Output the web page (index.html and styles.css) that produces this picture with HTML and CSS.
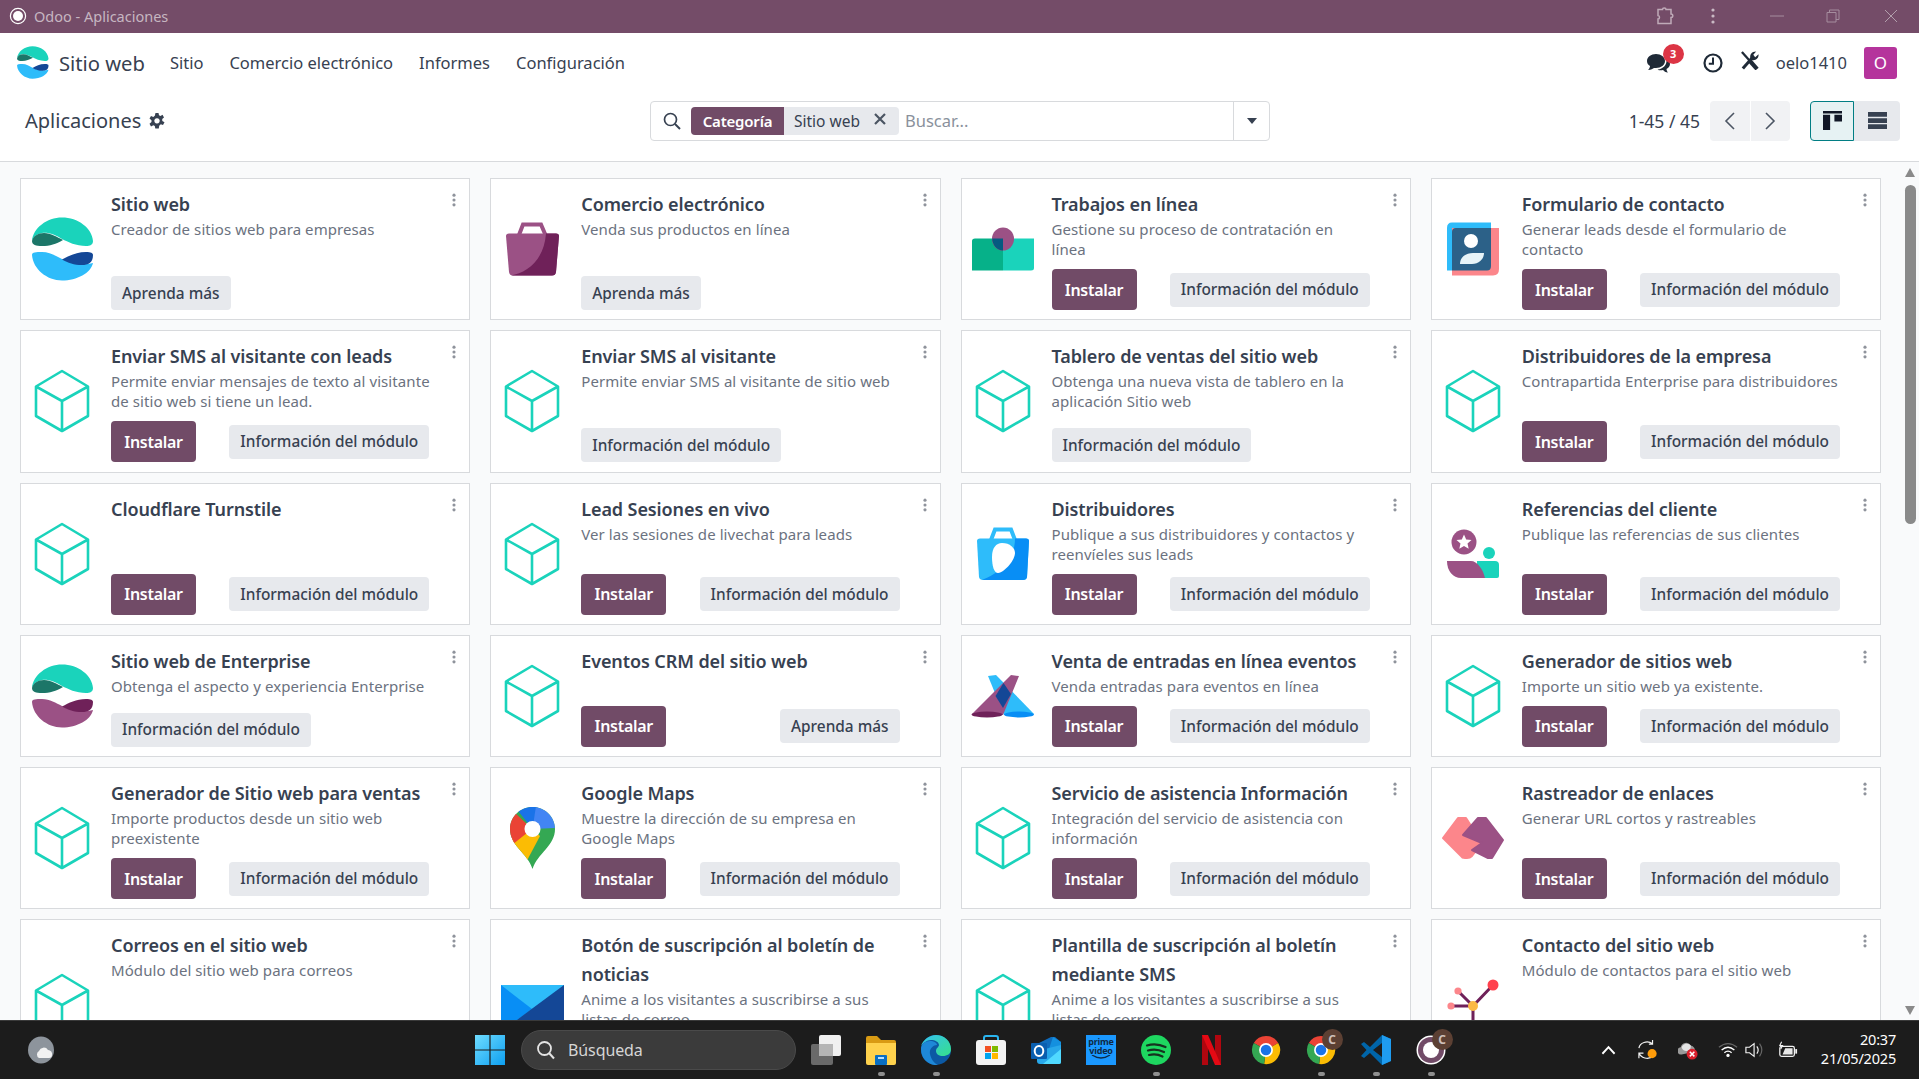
FILE: index.html
```html
<!DOCTYPE html>
<html lang="es">
<head>
<meta charset="utf-8">
<title>Odoo - Aplicaciones</title>
<link rel="stylesheet" href="styles.css">
</head>
<body>
<svg class="defs" width="0" height="0" aria-hidden="true">
  <defs>
    <symbol id="cube" viewBox="0 0 64 64"><path d="M32 2 58 17.5V47L32 62 6 47V17.5ZM6 17.5 32 32 58 17.5M32 32V62" fill="none" stroke="#1ad3bb" stroke-width="2.6" stroke-linejoin="round"/></symbol>
    <symbol id="dots" viewBox="0 0 6 16"><circle cx="3" cy="2.5" r="1.8"/><circle cx="3" cy="8" r="1.8"/><circle cx="3" cy="13.5" r="1.8"/></symbol>
    <symbol id="wave-top" viewBox="0 0 64 64"><path fill="#1ad3bb" d="M2 24C3 11 17 .5 32 .5 48 .5 62 11 63 24 63 28 60 29 56 29 46 29 38 25 32 22 26 18 18 15 12 16 7 17 4 19 2 24Z"/><path fill="#1c7668" d="M2 24C3 19 8 16 14 16 21 16 27 20 33 23 26 27 20 29 12 29 6 29 2 28 2 24Z"/></symbol>
    <symbol id="chrome" viewBox="0 0 32 32"><path fill="#ea4335" d="M16 16 3 8.5A15 15 0 0 1 29 8.5Z"/><path fill="#fbbc04" d="M16 16 29 8.5A15 15 0 0 1 14 30.9Z"/><path fill="#34a853" d="M16 16 14 30.9A15 15 0 0 1 3 8.5Z"/><circle cx="16" cy="16" r="7.4" fill="#fff"/><circle cx="16" cy="16" r="5.6" fill="#1a73e8"/></symbol>
  </defs>
</svg>
<div class="app">
  <header class="titlebar">
    <div class="tb-left">
      <svg class="tb-app" viewBox="0 0 18 18"><circle cx="9" cy="9" r="7.6" fill="none" stroke="#fff" stroke-width="1.2"/><circle cx="9" cy="9" r="5" fill="#fff"/></svg>
      <span>Odoo - Aplicaciones</span>
    </div>
    <div class="tb-right">
      <svg class="tb-ico tb-puzzle" viewBox="0 0 20 20"><path d="M3 3.5H7.5C7.5 1.5 11 1.5 11 3.5H16V8C18.4 8 18.4 11.5 16 11.5V17.5H3V13C5 13 5 9.5 3 9.5Z" fill="none" stroke="#bfaab8" stroke-width="1.5"/></svg>
      <svg class="tb-ico tb-more" viewBox="0 0 6 18"><circle cx="3" cy="3" r="1.6" fill="#c9b9c4"/><circle cx="3" cy="9" r="1.6" fill="#c9b9c4"/><circle cx="3" cy="15" r="1.6" fill="#c9b9c4"/></svg>
      <svg class="tb-ico tb-min" viewBox="0 0 14 14"><path d="M0 7H14" stroke="#a58d9e" stroke-width="1"/></svg>
      <svg class="tb-ico tb-rest" viewBox="0 0 14 14"><path d="M1 3.5H10V13H1ZM3.5 3.5V1H13V10.5H10" fill="none" stroke="#a58d9e" stroke-width="1"/></svg>
      <svg class="tb-ico tb-close" viewBox="0 0 14 14"><path d="M1 1 13 13M13 1 1 13" stroke="#b29fac" stroke-width="1"/></svg>
    </div>
  </header>

  <nav class="navbar">
    <svg class="nav-logo" viewBox="0 0 64 64"><use href="#wave-top"/><path fill="#2ebcfa" d="M2 38C2 35 6 35 12 35 20 35 26 39 32 42 38 45 44 47 52 47 56 47 60 47 63 46 61 56 47 63.5 32 63.5 17 63.5 3 52 2 38Z"/><path fill="#144796" d="M63 38C63 36 61 35 56 35 46 35 39 39 32 42.5 38 46 44 48 52 48 58 48 63 46 63 38Z"/></svg>
    <span class="nav-brand">Sitio web</span>
    <a class="nav-item">Sitio</a>
    <a class="nav-item">Comercio electrónico</a>
    <a class="nav-item">Informes</a>
    <a class="nav-item">Configuración</a>
    <div class="nav-right">
      <span class="chat">
        <svg class="chat-ico" viewBox="0 0 24 20"><path fill="#1f2a37" d="M10 1C5 1 1 4 1 8 1 10 2 12 4 13 4 14.500 3 16 2 17 5 17 7 15.500 8 15 9 15 9.500 15 10 15 15 15 19 12 19 8S15 1 10 1Z"/><path fill="#1f2a37" d="M20.500 7C21 12 17 16 11.500 16.500 13 17.500 15 17.500 17 17 18 18 19.500 19.500 22 19.500 21 18.500 20.500 17 20.500 16 22.500 15 24 13 24 11 24 9 22.500 8 20.500 7Z"/></svg>
        <span class="badge">3</span>
      </span>
      <svg class="nav-clock" viewBox="0 0 20 20"><circle cx="10" cy="10" r="8.500" fill="none" stroke="#1f2a37" stroke-width="2.200"/><path d="M10 4.500V10.800H5.800" fill="none" stroke="#1f2a37" stroke-width="2"/></svg>
      <svg class="nav-tools" viewBox="0 0 20 20"><path d="M2 1 10 10" stroke="#1f2a37" stroke-width="2.400"/><path d="M10 10 18 19" stroke="#1f2a37" stroke-width="4.400"/><path d="M3 18.500 12.500 7.500" stroke="#1f2a37" stroke-width="3.200"/><path d="M11 8C10 4 12 .5 17 .5L14 4 16 6.500 19.500 3.500C20 8 16 10.500 12.500 9.500Z" fill="#1f2a37"/></svg>
      <span class="nav-user">oelo1410</span>
      <span class="avatar">O</span>
    </div>
  </nav>

  <section class="control">
    <div class="crumb">
      <span class="crumb-title">Aplicaciones</span>
      <svg class="crumb-gear" viewBox="0 0 16 16"><path fill="#374151" fill-rule="evenodd" d="M6.500 0H9.500L10 2.200 11.500 2.900 13.500 1.800 15 4.500 13.200 6 13.300 8 15.500 9.200 14 12 11.800 11.200 10.200 12.800 9.800 15.500H6.300L5.800 13.100 4.300 12.300 2 13.500.5 10.800 2.500 9 2.500 7.200.5 5.600 2 3 4.300 3.900 5.800 2.700ZM8 5.200A2.700 2.700 0 1 0 8.001 5.200Z"/></svg>
    </div>
    <div class="search">
      <svg class="search-ico" viewBox="0 0 18 18"><circle cx="7.500" cy="7.500" r="6" fill="none" stroke="#374151" stroke-width="1.700"/><path d="M12 12 17 17" stroke="#374151" stroke-width="2"/></svg>
      <span class="facet-label">Categoría</span>
      <span class="facet-value">Sitio web<svg class="facet-x" viewBox="0 0 14 14"><path d="M2 2 12 12M12 2 2 12" stroke="#4b5563" stroke-width="2.200"/></svg></span>
      <span class="search-ph">Buscar...</span>
      <span class="search-drop"><span class="caret"></span></span>
    </div>
    <div class="tools">
      <span class="pager-text">1-45 / 45</span>
      <div class="pager">
        <span class="pager-btn"><svg viewBox="0 0 12 20"><path d="M10 2 2 10 10 18" fill="none" stroke="#4b5563" stroke-width="1.600"/></svg></span>
        <span class="pager-btn"><svg viewBox="0 0 12 20"><path d="M2 2 10 10 2 18" fill="none" stroke="#4b5563" stroke-width="1.600"/></svg></span>
      </div>
      <div class="views">
        <span class="view view-on"><svg viewBox="0 0 20 20"><path fill="#111827" d="M0 0H20V2.500H0ZM0 4H7.500V20H0ZM12 4H20V11H12Z"/></svg></span>
        <span class="view"><svg viewBox="0 0 20 20"><path fill="#374151" d="M0 1H20V6H0ZM0 7.500H20V12.500H0ZM0 14H20V19H0Z"/></svg></span>
      </div>
    </div>
  </section>

  <main class="content">
    <div class="grid">
      <article class="card">
        <svg class="card-icon" viewBox="0 0 64 64"><use href="#wave-top"/><path fill="#2ebcfa" d="M2 38C2 35 6 35 12 35 20 35 26 39 32 42 38 45 44 47 52 47 56 47 60 47 63 46 61 56 47 63.500 32 63.500 17 63.500 3 52 2 38Z"/><path fill="#144796" d="M63 38C63 36 61 35 56 35 46 35 39 39 32 42.500 38 46 44 48 52 48 58 48 63 46 63 38Z"/></svg>
        <div class="card-body">
          <h3>Sitio web</h3><p>Creador de sitios web para empresas</p>
          <div class="actions"><a class="btn-sec">Aprenda más</a></div>
        </div>
        <svg class="kebab"><use href="#dots"/></svg>
      </article>
      <article class="card">
        <svg class="card-icon" viewBox="0 0 64 64"><path d="M19 18 23 7.500H41L45.500 18" fill="none" stroke="#9b5185" stroke-width="4"/><path fill="#9b5185" d="M6 19Q6 16.500 9 16.500H56Q59 16.500 59 19L56 55Q55.500 58.500 52 58.500H13Q9.500 58.500 9 55Z"/><path fill="#6f2159" d="M46 16.500H56Q59 16.500 59 19L56 55Q55.500 58.500 52 58.500H11C26 56 44 44 46 16.500Z"/></svg>
        <div class="card-body">
          <h3>Comercio electrónico</h3><p>Venda sus productos en línea</p>
          <div class="actions"><a class="btn-sec">Aprenda más</a></div>
        </div>
        <svg class="kebab"><use href="#dots"/></svg>
      </article>
      <article class="card">
        <svg class="card-icon" viewBox="0 0 64 64"><path fill="#1ad3bb" d="M32 21.500H63V51Q63 53.500 60 53.500H32Z"/><path fill="#06b189" d="M1 24Q1 21.500 4 21.500H32V53.500H1Z"/><ellipse cx="32" cy="22" rx="11" ry="11.500" fill="#9b5185"/><path fill="#055a80" d="M21.200 21.500H32V33.500C26 33.500 21.200 28 21.200 21.500Z"/></svg>
        <div class="card-body">
          <h3>Trabajos en línea</h3><p>Gestione su proceso de contratación en<br>línea</p>
          <div class="actions"><a class="btn-pri">Instalar</a><a class="btn-sec">Información del módulo</a></div>
        </div>
        <svg class="kebab"><use href="#dots"/></svg>
      </article>
      <article class="card">
        <svg class="card-icon" viewBox="0 0 64 64"><path fill="#2ebcfa" d="M11 5.500H50V53.500H6V11Q6 5.500 11 5.500Z"/><path fill="#fc868b" d="M11 11H58V52Q58 58.500 52 58.500H11Z"/><path fill="#2c6188" d="M15 11H50V49Q50 53.500 46 53.500H11V15Q11 11 15 11Z"/><circle cx="30" cy="24" r="7" fill="#fff"/><path fill="#e8f4f8" d="M19 47C19 40 25 36 32 36H43C43 42 38 47 31 47Z"/></svg>
        <div class="card-body">
          <h3>Formulario de contacto</h3><p>Generar leads desde el formulario de<br>contacto</p>
          <div class="actions"><a class="btn-pri">Instalar</a><a class="btn-sec">Información del módulo</a></div>
        </div>
        <svg class="kebab"><use href="#dots"/></svg>
      </article>

      <article class="card">
        <svg class="card-icon"><use href="#cube"/></svg>
        <div class="card-body">
          <h3>Enviar SMS al visitante con leads</h3><p>Permite enviar mensajes de texto al visitante<br>de sitio web si tiene un lead.</p>
          <div class="actions"><a class="btn-pri">Instalar</a><a class="btn-sec">Información del módulo</a></div>
        </div>
        <svg class="kebab"><use href="#dots"/></svg>
      </article>
      <article class="card">
        <svg class="card-icon"><use href="#cube"/></svg>
        <div class="card-body">
          <h3>Enviar SMS al visitante</h3><p>Permite enviar SMS al visitante de sitio web</p>
          <div class="actions"><a class="btn-sec">Información del módulo</a></div>
        </div>
        <svg class="kebab"><use href="#dots"/></svg>
      </article>
      <article class="card">
        <svg class="card-icon"><use href="#cube"/></svg>
        <div class="card-body">
          <h3>Tablero de ventas del sitio web</h3><p>Obtenga una nueva vista de tablero en la<br>aplicación Sitio web</p>
          <div class="actions"><a class="btn-sec">Información del módulo</a></div>
        </div>
        <svg class="kebab"><use href="#dots"/></svg>
      </article>
      <article class="card">
        <svg class="card-icon"><use href="#cube"/></svg>
        <div class="card-body">
          <h3>Distribuidores de la empresa</h3><p>Contrapartida Enterprise para distribuidores</p>
          <div class="actions"><a class="btn-pri">Instalar</a><a class="btn-sec">Información del módulo</a></div>
        </div>
        <svg class="kebab"><use href="#dots"/></svg>
      </article>

      <article class="card">
        <svg class="card-icon"><use href="#cube"/></svg>
        <div class="card-body">
          <h3>Cloudflare Turnstile</h3>
          <div class="actions"><a class="btn-pri">Instalar</a><a class="btn-sec">Información del módulo</a></div>
        </div>
        <svg class="kebab"><use href="#dots"/></svg>
      </article>
      <article class="card">
        <svg class="card-icon"><use href="#cube"/></svg>
        <div class="card-body">
          <h3>Lead Sesiones en vivo</h3><p>Ver las sesiones de livechat para leads</p>
          <div class="actions"><a class="btn-pri">Instalar</a><a class="btn-sec">Información del módulo</a></div>
        </div>
        <svg class="kebab"><use href="#dots"/></svg>
      </article>
      <article class="card">
        <svg class="card-icon" viewBox="0 0 64 64"><path d="M20 18 24 7.500H40L44 18" fill="none" stroke="#2ebcfa" stroke-width="4"/><path fill="#2ebcfa" d="M6 19Q6 16.500 9 16.500H55Q58 16.500 58 19L56 55Q55.500 58 52 58H12Q8.500 58 8 55Z"/><path fill="#088ef5" d="M44 16.500H55Q58 16.500 58 19L56 55Q55.500 58 52 58H11C26 52 44 40 44 16.500Z"/><path fill="#fff" d="M31 21C39 21 44 26 44 31 44 38 34 50 27 51 23 51 21 44 21 35 21 26 25 21 31 21Z"/></svg>
        <div class="card-body">
          <h3>Distribuidores</h3><p>Publique a sus distribuidores y contactos y<br>reenvíeles sus leads</p>
          <div class="actions"><a class="btn-pri">Instalar</a><a class="btn-sec">Información del módulo</a></div>
        </div>
        <svg class="kebab"><use href="#dots"/></svg>
      </article>
      <article class="card">
        <svg class="card-icon" viewBox="0 0 64 64"><circle cx="23" cy="20" r="12.500" fill="#9b5185"/><path fill="#fff" d="M23 12.500 25.200 17.500 30.500 18 26.500 21.500 27.700 26.800 23 24 18.300 26.800 19.500 21.500 15.500 18 20.800 17.500Z"/><circle cx="48" cy="31" r="6" fill="#1ad3bb"/><path fill="#1ad3bb" d="M36 39H54Q58 39 58 43V54Q58 56 56 56H36Z"/><path fill="#9b5185" d="M6 39H30C36 39 42 47 44 56H20C12 56 6 49 6 39Z"/></svg>
        <div class="card-body">
          <h3>Referencias del cliente</h3><p>Publique las referencias de sus clientes</p>
          <div class="actions"><a class="btn-pri">Instalar</a><a class="btn-sec">Información del módulo</a></div>
        </div>
        <svg class="kebab"><use href="#dots"/></svg>
      </article>

      <article class="card">
        <svg class="card-icon" viewBox="0 0 64 64"><use href="#wave-top"/><path fill="#9b5185" d="M2 38C2 35 6 35 12 35 20 35 26 39 32 42 38 45 44 47 52 47 56 47 60 47 63 46 61 56 47 63.500 32 63.500 17 63.500 3 52 2 38Z"/><path fill="#6f2159" d="M63 38C63 36 61 35 56 35 46 35 39 39 32 42.500 38 46 44 48 52 48 58 48 63 46 63 38Z"/></svg>
        <div class="card-body">
          <h3>Sitio web de Enterprise</h3><p>Obtenga el aspecto y experiencia Enterprise</p>
          <div class="actions"><a class="btn-sec">Información del módulo</a></div>
        </div>
        <svg class="kebab"><use href="#dots"/></svg>
      </article>
      <article class="card">
        <svg class="card-icon"><use href="#cube"/></svg>
        <div class="card-body">
          <h3>Eventos CRM del sitio web</h3>
          <div class="actions"><a class="btn-pri">Instalar</a><a class="btn-sec">Aprenda más</a></div>
        </div>
        <svg class="kebab"><use href="#dots"/></svg>
      </article>
      <article class="card">
        <svg class="card-icon" viewBox="0 0 64 64"><path fill="#2ebcfa" d="M17 12 25 11 63 50 33 51Z"/><path fill="#9b5185" d="M40 11 48 12 32 51 1 50Z"/><path fill="#144796" d="M32.500 19 40 30 32 44 24.500 32Z"/><ellipse cx="16" cy="50.500" rx="15.500" ry="3" fill="#6f2159"/><ellipse cx="48" cy="50.500" rx="15" ry="3" fill="#088ef5"/></svg>
        <div class="card-body">
          <h3>Venta de entradas en línea eventos</h3><p>Venda entradas para eventos en línea</p>
          <div class="actions"><a class="btn-pri">Instalar</a><a class="btn-sec">Información del módulo</a></div>
        </div>
        <svg class="kebab"><use href="#dots"/></svg>
      </article>
      <article class="card">
        <svg class="card-icon"><use href="#cube"/></svg>
        <div class="card-body">
          <h3>Generador de sitios web</h3><p>Importe un sitio web ya existente.</p>
          <div class="actions"><a class="btn-pri">Instalar</a><a class="btn-sec">Información del módulo</a></div>
        </div>
        <svg class="kebab"><use href="#dots"/></svg>
      </article>

      <article class="card">
        <svg class="card-icon"><use href="#cube"/></svg>
        <div class="card-body">
          <h3>Generador de Sitio web para ventas</h3><p>Importe productos desde un sitio web<br>preexistente</p>
          <div class="actions"><a class="btn-pri">Instalar</a><a class="btn-sec">Información del módulo</a></div>
        </div>
        <svg class="kebab"><use href="#dots"/></svg>
      </article>
      <article class="card">
        <svg class="card-icon" viewBox="0 0 64 64"><defs><clipPath id="pin"><path d="M32.500 1C20 1 10 11 10 23 10 31 14 37 19 43 25 50 30 55 32.500 63 35 55 40 50 46 43 51 37 55 31 55 23 55 11 45 1 32.500 1Z"/></clipPath></defs><g clip-path="url(#pin)"><rect x="8" y="0" width="50" height="64" fill="#34a853"/><path fill="#fbbc04" d="M8 34 32 23 40 30 22 64H8Z"/><path fill="#ea4335" d="M8 0 32 23 8 42Z"/><path fill="#1a73e8" d="M14 0H38L32.500 23Z"/><path fill="#4285f4" d="M36 0H58V22L32.500 23Z"/></g><circle cx="32.500" cy="23" r="8" fill="#fff"/></svg>
        <div class="card-body">
          <h3>Google Maps</h3><p>Muestre la dirección de su empresa en<br>Google Maps</p>
          <div class="actions"><a class="btn-pri">Instalar</a><a class="btn-sec">Información del módulo</a></div>
        </div>
        <svg class="kebab"><use href="#dots"/></svg>
      </article>
      <article class="card">
        <svg class="card-icon"><use href="#cube"/></svg>
        <div class="card-body">
          <h3>Servicio de asistencia Información</h3><p>Integración del servicio de asistencia con<br>información</p>
          <div class="actions"><a class="btn-pri">Instalar</a><a class="btn-sec">Información del módulo</a></div>
        </div>
        <svg class="kebab"><use href="#dots"/></svg>
      </article>
      <article class="card">
        <svg class="card-icon" viewBox="0 0 64 64"><path fill="#fc868b" stroke="#fc868b" stroke-width="2" stroke-linejoin="round" d="M2 32 17 12H25L41 37 31 50Q29 52 26 52H24Q21 52 20 50Z"/><path fill="#9b5185" stroke="#9b5185" stroke-width="2" stroke-linejoin="round" d="M37 12H45L62 34 51 52H47L31 44 41 37 22 29Z"/></svg>
        <div class="card-body">
          <h3>Rastreador de enlaces</h3><p>Generar URL cortos y rastreables</p>
          <div class="actions"><a class="btn-pri">Instalar</a><a class="btn-sec">Información del módulo</a></div>
        </div>
        <svg class="kebab"><use href="#dots"/></svg>
      </article>

      <article class="card card-tall">
        <svg class="card-icon"><use href="#cube"/></svg>
        <div class="card-body">
          <h3>Correos en el sitio web</h3><p>Módulo del sitio web para correos</p>
        </div>
        <svg class="kebab"><use href="#dots"/></svg>
      </article>
      <article class="card card-tall">
        <svg class="card-icon" viewBox="0 0 64 64"><rect x="1" y="12" width="63" height="40" fill="#2ebcfa"/><path fill="#088ef5" d="M1 12 32 36 10 52H1Z"/><path fill="#144796" d="M64 12V52H10Z"/></svg>
        <div class="card-body">
          <h3>Botón de suscripción al boletín de noticias</h3><p>Anime a los visitantes a suscribirse a sus<br>listas de correo</p>
        </div>
        <svg class="kebab"><use href="#dots"/></svg>
      </article>
      <article class="card card-tall">
        <svg class="card-icon"><use href="#cube"/></svg>
        <div class="card-body">
          <h3>Plantilla de suscripción al boletín mediante SMS</h3><p>Anime a los visitantes a suscribirse a sus<br>listas de correo</p>
        </div>
        <svg class="kebab"><use href="#dots"/></svg>
      </article>
      <article class="card card-tall">
        <svg class="card-icon" viewBox="0 0 64 64"><path d="M52 12 32 33M17 18 32 33M10 33H32M32 33V62" fill="none" stroke="#6f2159" stroke-width="3"/><circle cx="52" cy="12" r="5.500" fill="#ff414d"/><circle cx="17" cy="18" r="3.600" fill="#fc868b"/><circle cx="10" cy="33" r="3.600" fill="#fc868b"/><circle cx="32" cy="33" r="5" fill="#fbb945"/></svg>
        <div class="card-body">
          <h3>Contacto del sitio web</h3><p>Módulo de contactos para el sitio web</p>
        </div>
        <svg class="kebab"><use href="#dots"/></svg>
      </article>
    </div>
    <div class="scroll">
      <span class="scroll-up"></span>
      <span class="scroll-thumb"></span>
      <span class="scroll-down"></span>
    </div>
  </main>

  <footer class="taskbar">
    <svg class="weather" viewBox="0 0 28 28"><ellipse cx="13" cy="14" rx="13" ry="13.500" fill="#8d949c"/><path fill="#f2f2f2" d="M11 22A4 4 0 0 1 11 15 5 5 0 0 1 20 14 4 4 0 0 1 24 19 3 3 0 0 1 21 22Z"/></svg>
    <svg class="winlogo" viewBox="0 0 30 30"><defs><linearGradient id="wg" x1="0" y1="0" x2="1" y2="1"><stop offset="0" stop-color="#6fdcff"/><stop offset="1" stop-color="#0d9ff0"/></linearGradient></defs><path fill="url(#wg)" d="M0 0H14.400V14.400H0ZM15.600 0H30V14.400H15.600ZM0 15.600H14.400V30H0ZM15.600 15.600H30V30H15.600Z"/></svg>
    <div class="tb-search">
      <svg viewBox="0 0 20 20"><circle cx="8.500" cy="8.500" r="6.500" fill="none" stroke="#e4e4e4" stroke-width="1.800"/><path d="M13 13 18 18.500" stroke="#e4e4e4" stroke-width="2"/></svg>
      <span>Búsqueda</span>
    </div>
    <div class="slots">
      <span class="slot"><svg viewBox="0 0 30 30"><rect x="0" y="9" width="22" height="21" rx="2" fill="#6a6a6a"/><rect x="8" y="0" width="22" height="21" rx="2" fill="#f0f0f0"/><rect x="8" y="9" width="14" height="12" fill="#b5b5b5"/></svg></span>
      <span class="slot slot-on"><svg viewBox="0 0 30 30"><path fill="#d99b14" d="M0 3Q0 1 2 1H11L15 5H28Q30 5 30 7V10H0Z"/><path fill="#ffd24d" d="M0 8H30V28Q30 30 28 30H2Q0 30 0 28Z"/><rect x="9" y="20" width="12" height="10" rx="1" fill="#0a6fc2"/><rect x="12" y="22" width="6" height="2" fill="#b7e0ff"/></svg></span>
      <span class="slot slot-on"><svg viewBox="0 0 30 30"><defs><linearGradient id="eg" x1="0" y1="0" x2="1" y2="1"><stop offset="0" stop-color="#35c1f1"/><stop offset="1" stop-color="#36e08a"/></linearGradient></defs><circle cx="15" cy="15" r="15" fill="#0c59a4"/><path fill="url(#eg)" d="M15 0C23 0 30 6 30 14 30 19 26 21 22 21 18 21 15 19 15 16 15 13 18 12 18 10 18 7 14 5 10 5 6 5 2 8 0 11 2 5 8 0 15 0Z"/><path fill="#1e88d8" d="M0 14C0 9 4 6 9 6 13 6 16 8 16 10 12 10 8 14 9 19 10 24 13 28 17 30 8 31 0 24 0 14Z"/></svg></span>
      <span class="slot"><svg viewBox="0 0 30 30"><path d="M8 7V3Q8 1 10 1H20Q22 1 22 3V7" fill="none" stroke="#2ab5f0" stroke-width="2"/><rect x="0" y="5" width="30" height="25" rx="3" fill="#f3f3f3"/><rect x="9" y="11" width="6" height="6" fill="#f25022"/><rect x="16" y="11" width="6" height="6" fill="#7fba00"/><rect x="9" y="18" width="6" height="6" fill="#00a4ef"/><rect x="16" y="18" width="6" height="6" fill="#ffb900"/></svg></span>
      <span class="slot"><svg viewBox="0 0 30 30"><path fill="#0f6cbd" d="M6 9 20 2H24L30 7V14H6Z"/><path fill="#1490df" d="M22 2 30 7V14H18Z"/><path fill="#28a8ea" d="M6 16 30 10V27Q30 29 28 29H9Q6 29 6 26Z"/><path fill="#50d9ff" d="M12 29 30 14V27Q30 29 28 29Z"/><rect x="0" y="8" width="16" height="16" rx="1" fill="#0a5fb0"/><ellipse cx="8" cy="16" rx="4.300" ry="5" fill="none" stroke="#fff" stroke-width="2"/></svg></span>
      <span class="slot"><span class="prime">prime<br>video<svg viewBox="0 0 20 5"><path d="M1 0Q10 6 19 0" fill="none" stroke="#0f2a44" stroke-width="1.400"/></svg></span></span>
      <span class="slot slot-on"><svg viewBox="0 0 30 30"><circle cx="15" cy="15" r="15" fill="#1ed760"/><path d="M6 10.500Q15 7.500 24.500 12M7 15.500Q15 13 23 17M8 20Q15 18 21.500 21.500" fill="none" stroke="#16321f" stroke-width="2.200" stroke-linecap="round"/></svg></span>
      <span class="slot"><svg class="netflix" viewBox="0 0 19 30"><path fill="#b1060f" d="M0 0H6V30L0 30Z"/><path fill="#b1060f" d="M13 0H19V30H13Z"/><path fill="#e50914" d="M0 0H6L19 30H13Z"/></svg></span>
      <span class="slot"><svg viewBox="0 0 32 32"><use href="#chrome"/></svg></span>
      <span class="slot slot-on"><svg viewBox="0 0 32 32"><use href="#chrome"/></svg><span class="cbadge">C</span></span>
      <span class="slot slot-on"><svg viewBox="0 0 30 30"><path fill="#0065a9" d="M21 0 9 12 3 7 0 9 5.500 15 0 21 3 23 9 18 21 30 30 26V4ZM21 8V22L12 15Z"/><path fill="#1f9cf0" d="M21 0 30 4V26L21 30Z"/></svg></span>
      <span class="slot slot-on"><svg viewBox="0 0 30 30"><circle cx="15" cy="15" r="14.500" fill="#fff"/><circle cx="15" cy="15" r="13" fill="#714b67"/><circle cx="15" cy="15" r="8" fill="#fff"/></svg><span class="cbadge">C</span></span>
    </div>
    <div class="tray">
      <span class="tray-slot"><svg viewBox="0 0 16 10"><path d="M1.500 9 8 2 14.500 9" fill="none" stroke="#fff" stroke-width="2"/></svg></span>
      <span class="tray-slot"><svg viewBox="0 0 22 22"><path d="M1 9C2 3 10 0 16 4M16 0V4.500H12M17 18C11 22 3 20 1 14M1 20V14.500H6" fill="none" stroke="#f2f2f2" stroke-width="1.300"/><circle cx="15.500" cy="15" r="5" fill="#ff9c0a"/></svg></span>
      <span class="tray-slot"><svg viewBox="0 0 22 22"><path fill="#9a9a9a" d="M4 16A4 4 0 0 1 3 8 6 6 0 0 1 14 6 5 5 0 0 1 18 13Z"/><path fill="#e4e4e4" d="M4 8A6 6 0 0 1 14 6 5 5 0 0 1 4 8Z"/><circle cx="15.500" cy="15.500" r="6" fill="#d9202c"/><path d="M13 13 18 18M18 13 13 18" stroke="#fff" stroke-width="1.600"/></svg></span>
      <span class="tray-slot tray-wifi"><svg viewBox="0 0 22 18"><path d="M1 6Q11 -2 21 6" fill="none" stroke="#666" stroke-width="1.400"/><path d="M4 9Q11 3 18 9M7 12Q11 8.500 15 12" fill="none" stroke="#fff" stroke-width="1.500"/><circle cx="11" cy="15" r="1.800" fill="#fff"/></svg></span>
      <span class="tray-slot tray-sound"><svg viewBox="0 0 22 18"><path d="M1 6H5L10 2V16L5 12H1Z" fill="none" stroke="#f2f2f2" stroke-width="1.300"/><path d="M13 5Q16 9 13 13" fill="none" stroke="#f2f2f2" stroke-width="1.300"/><path d="M16 2Q21 9 16 16" fill="none" stroke="#666" stroke-width="1.300"/></svg></span>
      <span class="tray-slot"><svg viewBox="0 0 22 18"><rect x="2" y="5" width="16" height="11" rx="2" fill="none" stroke="#f2f2f2" stroke-width="1.400"/><path d="M5 14 8 7H16V14Z" fill="#e8e8e8"/><rect x="19" y="8" width="2" height="5" fill="#f2f2f2"/><path d="M4 0 2 4H5L3 8" fill="none" stroke="#f2f2f2" stroke-width="1.200"/></svg></span>
      <div class="clock"><span>20:37</span><span>21/05/2025</span></div>
    </div>
  </footer>
</div>
</body>
</html>
```
FILE: styles.css
```css
* { box-sizing: border-box; }
html, body { margin: 0; height: 100%; overflow: hidden; }
body { font-family: "Noto Sans", "Open Sans", sans-serif; color: #374151; background: #fff; }
.defs { position: absolute; }
.app { display: flex; flex-direction: column; height: 100vh; }

.titlebar { flex: 0 0 33px; background: #744c68; display: flex; align-items: center; justify-content: space-between; color: #c6b6c1; font-size: 14.5px; padding-bottom: 1px; }
.tb-left { display: flex; align-items: center; gap: 7px; padding-left: 9px; }
.tb-app { width: 18px; height: 18px; }
.tb-right { display: flex; align-items: center; }
.tb-ico { display: block; }
.tb-puzzle { width: 20px; height: 20px; margin-right: 35px; }
.tb-more { width: 6px; height: 18px; margin-right: 54px; }
.tb-min { width: 14px; height: 14px; margin-right: 42px; }
.tb-rest { width: 14px; height: 14px; margin-right: 44px; }
.tb-close { width: 14px; height: 14px; margin-right: 21px; }

.navbar { flex: 0 0 59px; display: flex; align-items: center; padding-left: 16px; font-size: 16.5px; color: #374151; }
.nav-logo { width: 33px; height: 33px; margin-right: 10px; }
.nav-brand { font-size: 20.2px; margin-right: 25px; }
.nav-item { margin-right: 26px; }
.nav-right { margin-left: auto; display: flex; align-items: center; padding-right: 22px; }
.chat { position: relative; display: block; width: 24px; height: 20px; margin-right: 33px; }
.chat-ico { width: 24px; height: 20px; display: block; }
.badge { position: absolute; left: 17px; top: -9px; width: 21px; height: 20px; border-radius: 50%; background: #dc3545; color: #fff; font-size: 11px; font-weight: 700; display: flex; align-items: center; justify-content: center; }
.nav-clock { width: 20px; height: 20px; margin-right: 17px; }
.nav-tools { width: 19px; height: 19px; margin-right: 17px; margin-top: -4px; }
.nav-user { font-size: 16.5px; margin-right: 17px; }
.avatar { width: 33px; height: 32px; border-radius: 3px; background: #b5349c; color: #fff; font-size: 17px; display: flex; align-items: center; justify-content: center; }

.control { flex: 0 0 70px; display: flex; align-items: center; border-bottom: 1px solid #d8dadd; padding: 0 19px 12px 25px; position: relative; }
.crumb { width: 625px; display: flex; align-items: center; gap: 8px; }
.crumb-title { font-size: 20px; }
.crumb-gear { width: 16px; height: 16px; }
.search { width: 620px; height: 40px; border: 1px solid #d8dadd; border-radius: 4px; display: flex; align-items: center; padding-left: 12px; }
.search-ico { width: 18px; height: 18px; margin-right: 10px; }
.facet-label { height: 28px; width: 93px; background: #714b67; color: #fff; font-size: 15px; font-weight: 600; border-radius: 4px 0 0 4px; display: flex; align-items: center; justify-content: center; letter-spacing: -.2px; }
.facet-value { height: 28px; width: 115px; background: #e7e9ed; border-radius: 0 4px 4px 0; display: flex; align-items: center; padding-left: 10px; font-size: 15.5px; }
.facet-x { width: 14px; height: 14px; margin-left: 13px; margin-top: -4px; }
.search-ph { margin-left: 6px; color: #8a919c; font-size: 16.5px; flex: 1; }
.search-drop { width: 36px; height: 38px; border-left: 1px solid #d8dadd; display: flex; align-items: center; justify-content: center; }
.caret { width: 0; height: 0; border: 5px solid transparent; border-top: 6px solid #374151; border-bottom: 0; }
.tools { flex: 1; display: flex; align-items: center; justify-content: flex-end; }
.pager-text { font-size: 17.5px; margin-right: 10px; }
.pager { display: flex; gap: 1px; margin-right: 20px; }
.pager-btn { width: 39.5px; height: 40px; background: #f1f2f4; display: flex; align-items: center; justify-content: center; }
.pager-btn:first-child { border-radius: 4px 0 0 4px; }
.pager-btn:last-child { border-radius: 0 4px 4px 0; }
.pager-btn svg { width: 12px; height: 20px; }
.views { display: flex; }
.view { width: 46px; height: 40px; background: #e7e9ed; border-radius: 0 4px 4px 0; display: flex; align-items: center; justify-content: center; }
.view svg { width: 19px; height: 19px; }
.view-on { width: 44px; background: #e6f2f3; border: 1px solid #017e84; border-radius: 4px 0 0 4px; }

.content { flex: 1; min-height: 0; overflow: hidden; background: #f9fafb; padding: 16px 38px 0 20px; position: relative; }
.grid { display: grid; grid-template-columns: repeat(4, 1fr); column-gap: 20px; row-gap: 10px; }
.card { position: relative; display: flex; background: #fff; border: 1px solid #d8dadd; }
.card-tall { min-height: 171px; }
.card-icon { flex: 0 0 64px; width: 64px; height: 64px; margin: 0 17px 0 9px; align-self: center; }
.card-body { flex: 1; min-width: 0; padding: 11px 40px 9.3px 0; display: flex; flex-direction: column; }
.card-body h3 { margin: 0; font-size: 18px; line-height: 29px; font-weight: 600; color: #374151; letter-spacing: -.1px; }
.card-body p { margin: 0 -4px 10px 0; font-size: 15px; line-height: 20px; color: #6b7280; letter-spacing: .08px; }
.actions { margin-top: auto; display: flex; justify-content: space-between; align-items: center; }
.btn-pri { height: 41px; width: 85px; background: #714b67; color: #fff; border-radius: 4px; font-size: 16px; font-weight: 600; display: flex; align-items: center; justify-content: center; letter-spacing: -.3px; }
.btn-sec { height: 34px; padding: 0 11px; background: #e7e9ed; color: #374151; border-radius: 4px; font-size: 15.4px; font-weight: 500; display: flex; align-items: center; }
.kebab { position: absolute; right: 12px; top: 14px; width: 6px; height: 14px; fill: #8f939c; }

.scroll { position: absolute; right: 3px; top: 6px; bottom: 5px; width: 11px; }
.scroll-up { position: absolute; left: 0; top: 0; width: 0; height: 0; border: 5.5px solid transparent; border-bottom: 9px solid #8a8a8a; border-top: 0; }
.scroll-thumb { position: absolute; left: 0; top: 17px; height: 339px; width: 11px; border-radius: 6px; background: #8a8a8a; }
.scroll-down { position: absolute; left: 0; bottom: 0; width: 0; height: 0; border: 5.5px solid transparent; border-top: 9px solid #8a8a8a; border-bottom: 0; }

.taskbar { flex: 0 0 59px; background: #1c1c1c; border-top: 1px solid #3a3a3a; display: flex; align-items: center; padding-left: 28px; }
.weather { width: 28px; height: 28px; margin-right: 419px; }
.winlogo { width: 30px; height: 30px; margin-right: 16px; }
.tb-search { width: 275px; height: 40px; border-radius: 20px; background: #3b3b3b; border: 1px solid #4a4a4a; display: flex; align-items: center; gap: 12px; padding-left: 14px; color: #d6d6d6; font-size: 16px; letter-spacing: -.1px; margin-right: 2.5px; }
.tb-search svg { width: 20px; height: 20px; }
.slots { display: flex; }
.slot { position: relative; width: 55px; height: 40px; display: flex; align-items: center; justify-content: center; }
.slot > svg { width: 30px; height: 30px; }
.slot > svg.netflix { width: 19px; height: 30px; }
.slot-on::after { content: ""; position: absolute; left: 24px; bottom: -6px; width: 7px; height: 4px; border-radius: 2px; background: #8f8f8f; }
.prime { width: 30px; height: 30px; background: #1a98ff; color: #0f2a44; font-size: 9px; font-weight: 700; line-height: 9px; text-align: center; padding-top: 2px; letter-spacing: -.2px; }
.prime svg { display: block; width: 20px; height: 5px; margin: 0 auto; }
.cbadge { position: absolute; left: 28px; top: -1px; width: 21px; height: 21px; border-radius: 50%; background: #5c4033; color: #cdbfb8; font-size: 12px; font-weight: 700; display: flex; align-items: center; justify-content: center; }
.tray { margin-left: auto; display: flex; align-items: center; color: #fff; }
.tray-slot { width: 40px; display: flex; justify-content: center; }
.tray-slot svg { width: 20px; height: 20px; }
.tray-slot:first-child svg { width: 15px; height: 10px; }
.tray-wifi { width: 28px; margin-left: 6px; }
.tray-sound { width: 26px; }
.clock { width: 88px; display: flex; flex-direction: column; align-items: flex-end; margin-right: 23px; margin-top: -2px; font-size: 14.5px; line-height: 19px; letter-spacing: -.2px; }
```
